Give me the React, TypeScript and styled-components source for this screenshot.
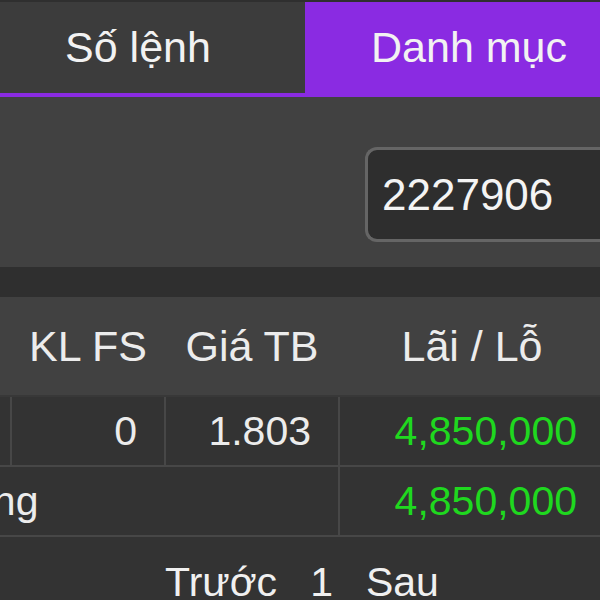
import styled, { createGlobalStyle } from 'styled-components'

const GlobalStyle = createGlobalStyle`
  html, body {
    margin: 0;
    padding: 0;
    background: #2f2f2f;
    overflow: hidden;
  }
  body {
    font-family: "Liberation Sans", Arial, sans-serif;
    color: #ececec;
  }
`

const Page = styled.div`
  width: 662px;
  margin-left: -29px;
  padding-top: 2px;
  display: flex;
  flex-direction: column;
`

const Tabs = styled.div`
  display: grid;
  grid-template-columns: 334px 1fr;
  height: 95px;
`

const Tab = styled.div<{ $active?: boolean }>`
  display: flex;
  align-items: center;
  justify-content: center;
  box-sizing: border-box;
  font-size: 43px;
  background: ${p => (p.$active ? '#8a2be2' : '#3c3c3c')};
  border-bottom: 4px solid #8a2be2;
  color: #f2f2f2;
`

const FilterBar = styled.div`
  display: flex;
  justify-content: flex-end;
  background: #414141;
  padding: 50px 0 25px;
`

const AccountInput = styled.div`
  width: 268px;
  height: 95px;
  box-sizing: border-box;
  border: 3px solid #656565;
  border-right: none;
  border-radius: 12px 0 0 12px;
  background: #2e2e2e;
  display: flex;
  align-items: center;
  padding-left: 14px;
  font-size: 44px;
  color: #f4f4f4;
`

const TableWrap = styled.div`
  margin-top: 30px;
  margin-left: -70px;
`

const Table = styled.table`
  border-collapse: collapse;
  table-layout: fixed;
  width: 703px;
  font-size: 41px;
`

const HeadCell = styled.th`
  height: 98px;
  padding: 0;
  background: #414141;
  font-weight: normal;
  font-size: 43px;
  text-align: center;
  vertical-align: middle;
  border-bottom: 2px solid #383838;
`

const Cell = styled.td<{ $green?: boolean; $left?: boolean }>`
  height: 68px;
  padding: 0 27px 0 ${p => (p.$left ? '42px' : '0')};
  background: #333333;
  text-align: ${p => (p.$left ? 'left' : 'right')};
  vertical-align: middle;
  border: 2px solid #474747;
  border-top: none;
  color: ${p => (p.$green ? '#1fd81f' : '#ececec')};
`

const Pager = styled.div`
  display: flex;
  justify-content: center;
  gap: 33px;
  background: #333333;
  padding-top: 22px;
  height: 80px;
  font-size: 41px;
  color: #f0f0f0;
`

const PageLink = styled.span`
  cursor: pointer;
`

export default function App() {
  return (
    <>
      <GlobalStyle />
      <Page>
        <Tabs>
          <Tab>Số lệnh</Tab>
          <Tab $active>Danh mục</Tab>
        </Tabs>
        <FilterBar>
          <AccountInput>2227906</AccountInput>
        </FilterBar>
        <TableWrap>
          <Table>
            <colgroup>
              <col style={{ width: 109 }} />
              <col style={{ width: 154 }} />
              <col style={{ width: 174 }} />
              <col style={{ width: 266 }} />
            </colgroup>
            <thead>
              <tr>
                <HeadCell>Mã</HeadCell>
                <HeadCell>KL FS</HeadCell>
                <HeadCell>Giá TB</HeadCell>
                <HeadCell>Lãi / Lỗ</HeadCell>
              </tr>
            </thead>
            <tbody>
              <tr>
                <Cell>HPG</Cell>
                <Cell>0</Cell>
                <Cell>1.803</Cell>
                <Cell $green>4,850,000</Cell>
              </tr>
              <tr>
                <Cell $left colSpan={3}>Tổng</Cell>
                <Cell $green>4,850,000</Cell>
              </tr>
            </tbody>
          </Table>
        </TableWrap>
        <Pager>
          <PageLink>Trước</PageLink>
          <PageLink>1</PageLink>
          <PageLink>Sau</PageLink>
        </Pager>
      </Page>
    </>
  )
}
